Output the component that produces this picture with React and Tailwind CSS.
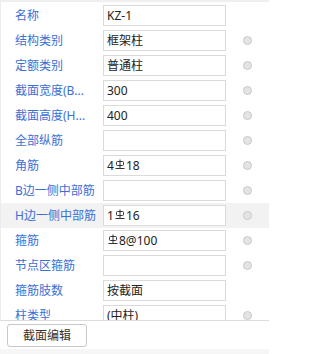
import React from 'react';

// HRB400 rebar grade symbol
function Gang3() {
  return (
    <svg width="10" height="11" viewBox="0 0 10 11" className="inline-block mx-[1px] -mt-[3px]" fill="none" stroke="#333" strokeWidth="1">
      <rect x="1.5" y="2.5" width="7" height="4" rx="1" />
      <path d="M5 0.5V9.5" />
      <path d="M0.5 9.5H9.5" />
    </svg>
  );
}

const rows = [
  { label: '名称', value: 'KZ-1', dot: false },
  { label: '结构类别', value: '框架柱', dot: true },
  { label: '定额类别', value: '普通柱', dot: true },
  { label: '截面宽度(B...', value: '300', dot: true },
  { label: '截面高度(H...', value: '400', dot: true },
  { label: '全部纵筋', value: '', dot: true },
  { label: '角筋', value: ['4', 'g', '18'], dot: true },
  { label: 'B边一侧中部筋', value: '', dot: true },
  { label: 'H边一侧中部筋', value: ['1', 'g', '16'], dot: true, active: true },
  { label: '箍筋', value: ['', 'g', '8@100'], dot: true },
  { label: '节点区箍筋', value: '', dot: true },
  { label: '箍筋肢数', value: '按截面', dot: false },
  { label: '柱类型', value: '(中柱)', dot: true },
];

function Value({ value }) {
  if (Array.isArray(value)) {
    return (
      <>
        {value.map((v, i) => (v === 'g' ? <Gang3 key={i} /> : <span key={i}>{v}</span>))}
      </>
    );
  }
  return value;
}

export default function App() {
  return (
    <div
      className="w-[269px] h-[354px] bg-white flex flex-col overflow-hidden text-[12px]"
      style={{ fontFamily: '"Noto Sans", "Noto Sans CJK SC", sans-serif' }}
    >
      <div className="h-[321px] shrink-0 overflow-hidden border-t-2 border-[#efefef] border-l border-l-[#ececec] border-b border-b-[#dcdcdc] pt-[1px]">
        {rows.map(r => (
          <div
            key={r.label}
            className={`h-[25px] flex items-center ${r.active ? 'bg-[#f2f2f2]' : ''}`}
          >
            <div className="w-[102px] shrink-0 pl-[14px] text-[#3a6fd6] whitespace-nowrap leading-[18px]">
              {r.label}
            </div>
            <div className="w-[123px] h-[21px] shrink-0 bg-white border border-[#dadada] pl-[3px] flex items-center text-[#222] whitespace-nowrap leading-[18px]">
              <Value value={r.value} />
            </div>
            {r.dot && (
              <div className="ml-[17px] w-[9px] h-[9px] rounded-full bg-[#e4e4e4] border border-[#c9c9c9]" />
            )}
          </div>
        ))}
      </div>
      <div className="h-[28px] shrink-0 pl-[7px] pt-[3px]">
        <button className="w-[80px] h-[23px] rounded-[3px] border border-[#c8c8c8] bg-white text-[#333] text-[12px] leading-[18px]">
          截面编辑
        </button>
      </div>
      <div className="flex-1 bg-[#f6f6f6]" />
    </div>
  );
}
